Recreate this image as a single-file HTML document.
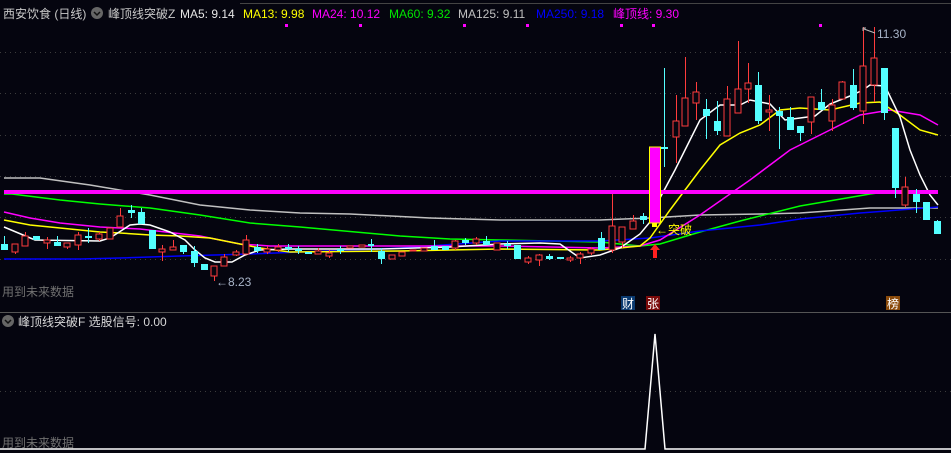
<!DOCTYPE html>
<html><head><meta charset="utf-8"><style>
html,body{margin:0;padding:0;background:#05050f;width:951px;height:453px;overflow:hidden}
svg{display:block}
text{font-family:"Liberation Sans","Noto Sans CJK SC",sans-serif;font-size:12px}
</style></head><body>
<svg width="951" height="453" viewBox="0 0 951 453" xmlns="http://www.w3.org/2000/svg">
<rect width="951" height="453" fill="#05050f"/>
<line x1="240" y1="3.5" x2="951" y2="3.5" stroke="#444" stroke-width="1"/>
<g stroke="#3c3c3c" stroke-dasharray="1 4">
<line x1="0" y1="52.5" x2="951" y2="52.5"/><line x1="0" y1="93.5" x2="951" y2="93.5"/>
<line x1="0" y1="135.5" x2="951" y2="135.5"/><line x1="0" y1="176.5" x2="951" y2="176.5"/>
<line x1="0" y1="217.5" x2="951" y2="217.5"/><line x1="0" y1="259.5" x2="951" y2="259.5"/>
<line x1="0" y1="391.5" x2="951" y2="391.5"/>
</g>
<line x1="0" y1="312.5" x2="951" y2="312.5" stroke="#555"/>
<!-- header -->
<text x="3" y="18" fill="#c8c8c8">西安饮食 (日线)</text>
<circle cx="97" cy="13" r="6" fill="#666"/><path d="M94 12 l3 3 l3 -3" stroke="#111" fill="none" stroke-width="1.5"/>
<text x="108" y="18" fill="#c8c8c8">峰顶线突破Z</text>
<text x="180" y="18" fill="#e6e6e6">MA5: 9.14</text>
<text x="243" y="18" fill="#ffff00">MA13: 9.98</text>
<text x="312" y="18" fill="#ff00ff">MA24: 10.12</text>
<text x="389" y="18" fill="#00e600">MA60: 9.32</text>
<text x="458" y="18" fill="#c0c0c0">MA125: 9.11</text>
<text x="536" y="18" fill="#0000ff">MA250: 9.18</text>
<text x="613" y="18" fill="#ff00ff">峰顶线: 9.30</text>
<g fill="#ff00ff"><rect x="285" y="24" width="3" height="3"/><rect x="359" y="24" width="3" height="3"/><rect x="463" y="24" width="3" height="3"/><rect x="526" y="24" width="3" height="3"/><rect x="620" y="24" width="3" height="3"/><rect x="652" y="24" width="3" height="3"/><rect x="819" y="24" width="3" height="3"/></g>
<!-- MA lines -->
<polyline fill="none" stroke="#c0c0c0" stroke-width="1.5" points="4,178 40,178 90,185 150,195 200,205 250,210 300,213 350,214 430,218 500,220 600,220 650,218 700,215 760,214 800,213 870,208 938,208"/>
<polyline fill="none" stroke="#00ff00" stroke-width="1.5" points="4,194 12,194 60,200 100,204 150,208 200,215 250,223 300,227 400,236 450,239 500,240 600,242 640,246 660,244 700,232 740,221 800,206 870,194 885,192"/>
<polyline fill="none" stroke="#0000ff" stroke-width="1.5" points="4,259 80,259 120,258 180,256 250,254 300,252 400,248 500,241 600,241 650,238 700,231 760,225 800,219 860,213 938,207"/>
<polyline fill="none" stroke="#ff00ff" stroke-width="1.5" points="4,212 30,218 60,223 100,227 140,229 200,236 240,244 270,246 400,246 500,246 600,248 640,246 660,240 700,215 750,180 790,150 830,130 860,115 890,110 920,115 938,125"/>
<polyline fill="none" stroke="#ffff00" stroke-width="1.5" points="4,220 30,225 60,228 100,232 120,233 150,235 180,236 210,238 240,244 260,248 290,252 400,251 500,249 600,250 640,246 650,238 670,210 700,170 720,145 740,133 760,125 780,110 800,108 830,110 860,103 880,102 900,115 920,130 938,135"/>
<polyline fill="none" stroke="#ffffff" stroke-width="1.5" points="4,227 35,240 100,241 110,238 130,225 140,224 150,225 170,232 185,240 195,250 205,258 215,262 232,262 245,255 260,250 290,249 380,249 450,247 500,244 540,243 560,244 580,258 600,255 620,248 640,234 650,222 660,198 675,170 690,140 700,120 720,105 740,105 750,100 770,104 785,120 800,118 815,116 830,104 850,96 863,90 870,85 885,86 900,117 910,150 920,175 930,195 938,205"/>
<rect x="4" y="190" width="934" height="4" fill="#ff00ff"/>
<!-- candles: wicks -->
<g stroke="#ff3c3c" stroke-width="1" shape-rendering="crispEdges" transform="translate(0.5,0)">
<line x1="15" y1="244" x2="15" y2="254"/><line x1="25" y1="232" x2="25" y2="246"/><line x1="47" y1="237" x2="47" y2="249"/><line x1="67" y1="243" x2="67" y2="249"/><line x1="78" y1="232" x2="78" y2="250"/><line x1="99" y1="232" x2="99" y2="241"/><line x1="120" y1="208" x2="120" y2="227"/><line x1="162" y1="245" x2="162" y2="261"/><line x1="173" y1="240" x2="173" y2="250"/><line x1="214" y1="266" x2="214" y2="281"/><line x1="224" y1="254" x2="224" y2="266"/><line x1="236" y1="250" x2="236" y2="256"/><line x1="246" y1="235" x2="246" y2="254"/><line x1="267" y1="246" x2="267" y2="254"/><line x1="278" y1="244" x2="278" y2="252"/><line x1="318" y1="248" x2="318" y2="254"/><line x1="329" y1="250" x2="329" y2="258"/><line x1="455" y1="240" x2="455" y2="250"/><line x1="476" y1="237" x2="476" y2="245"/><line x1="528" y1="256" x2="528" y2="264"/><line x1="539" y1="254" x2="539" y2="266"/><line x1="570" y1="256" x2="570" y2="262"/><line x1="580" y1="252" x2="580" y2="264"/><line x1="591" y1="247" x2="591" y2="255"/><line x1="612" y1="194" x2="612" y2="253"/><line x1="622" y1="227" x2="622" y2="248"/><line x1="633" y1="215" x2="633" y2="229"/>
<line x1="676" y1="95" x2="676" y2="163"/><line x1="685" y1="57" x2="685" y2="126"/><line x1="696" y1="82" x2="696" y2="120"/><line x1="727" y1="86" x2="727" y2="136"/><line x1="738" y1="41" x2="738" y2="113"/><line x1="748" y1="63" x2="748" y2="103"/><line x1="769" y1="95" x2="769" y2="131"/><line x1="811" y1="97" x2="811" y2="134"/><line x1="832" y1="99" x2="832" y2="131"/><line x1="842" y1="81" x2="842" y2="99"/><line x1="863" y1="27" x2="863" y2="124"/><line x1="874" y1="27" x2="874" y2="102"/><line x1="905" y1="177" x2="905" y2="207"/>
</g>
<g stroke="#54ffff" stroke-width="1" shape-rendering="crispEdges" transform="translate(0.5,0)">
<line x1="4" y1="236" x2="4" y2="250"/><line x1="57" y1="236" x2="57" y2="246"/><line x1="88" y1="228" x2="88" y2="243"/><line x1="131" y1="205" x2="131" y2="218"/><line x1="141" y1="208" x2="141" y2="224"/><line x1="183" y1="245" x2="183" y2="254"/><line x1="194" y1="246" x2="194" y2="267"/><line x1="257" y1="244" x2="257" y2="253"/><line x1="288" y1="244" x2="288" y2="252"/><line x1="298" y1="246" x2="298" y2="254"/><line x1="340" y1="246" x2="340" y2="254"/><line x1="371" y1="239" x2="371" y2="252"/><line x1="381" y1="248" x2="381" y2="264"/><line x1="434" y1="240" x2="434" y2="250"/><line x1="465" y1="238" x2="465" y2="245"/><line x1="486" y1="236" x2="486" y2="245"/><line x1="507" y1="241" x2="507" y2="249"/><line x1="549" y1="254" x2="549" y2="260"/><line x1="601" y1="232" x2="601" y2="250"/><line x1="643" y1="213" x2="643" y2="224"/><line x1="664" y1="68" x2="664" y2="167"/><line x1="706" y1="99" x2="706" y2="139"/><line x1="717" y1="101" x2="717" y2="135"/><line x1="758" y1="72" x2="758" y2="124"/><line x1="779" y1="107" x2="779" y2="149"/><line x1="790" y1="107" x2="790" y2="130"/><line x1="800" y1="126" x2="800" y2="141"/><line x1="821" y1="89" x2="821" y2="110"/><line x1="853" y1="69" x2="853" y2="110"/><line x1="884" y1="68" x2="884" y2="120"/><line x1="895" y1="128" x2="895" y2="198"/><line x1="916" y1="189" x2="916" y2="213"/><line x1="937" y1="220" x2="937" y2="234"/>
</g>
<!-- red bodies -->
<g fill="#05050f" stroke="#ff3c3c" stroke-width="1.4" shape-rendering="crispEdges">
<rect x="12" y="244" width="6" height="8"/><rect x="22" y="236" width="6" height="10"/><rect x="44" y="240" width="6" height="3"/><rect x="64" y="243" width="6" height="4"/><rect x="75" y="235" width="6" height="10"/><rect x="96" y="234" width="6" height="5"/><rect x="107" y="228" width="6" height="11"/><rect x="117" y="216" width="6" height="11"/><rect x="159" y="249" width="6" height="3"/><rect x="170" y="247" width="6" height="3"/><rect x="211" y="266" width="6" height="10"/><rect x="221" y="257" width="6" height="9"/><rect x="233" y="252" width="6" height="3"/><rect x="243" y="240" width="6" height="14"/><rect x="264" y="249" width="6" height="3"/><rect x="275" y="247" width="6" height="3"/><rect x="315" y="251" width="6" height="3"/><rect x="326" y="253" width="6" height="3"/><rect x="347" y="246" width="6" height="2"/><rect x="359" y="245" width="6" height="2"/><rect x="389" y="255" width="6" height="4"/><rect x="399" y="252" width="6" height="4"/><rect x="410" y="250" width="6" height="1"/><rect x="421" y="248" width="6" height="3"/><rect x="452" y="241" width="6" height="7"/><rect x="473" y="239" width="6" height="4"/><rect x="494" y="243" width="6" height="7"/><rect x="525" y="258" width="6" height="4"/><rect x="536" y="255" width="6" height="5"/><rect x="567" y="258" width="6" height="2"/><rect x="577" y="254" width="6" height="4"/><rect x="588" y="249" width="6" height="4"/><rect x="609" y="226" width="6" height="24"/><rect x="619" y="227" width="6" height="15"/><rect x="630" y="221" width="6" height="8"/>
<rect x="673" y="121" width="6" height="16"/><rect x="682" y="98" width="6" height="28"/><rect x="693" y="92" width="6" height="11"/><rect x="724" y="99" width="6" height="37"/><rect x="735" y="89" width="6" height="24"/><rect x="745" y="83" width="6" height="6"/><rect x="766" y="110" width="6" height="2"/><rect x="808" y="97" width="6" height="25"/><rect x="829" y="105" width="6" height="16"/><rect x="839" y="82" width="6" height="17"/><rect x="860" y="66" width="6" height="45"/><rect x="871" y="58" width="6" height="27"/><rect x="902" y="187" width="6" height="18"/>
</g>
<!-- cyan bodies -->
<g fill="#54ffff" shape-rendering="crispEdges">
<rect x="1" y="244" width="7" height="6"/><rect x="33" y="236" width="7" height="4"/><rect x="54" y="242" width="7" height="4"/><rect x="85" y="236" width="7" height="2"/><rect x="128" y="210" width="7" height="3"/><rect x="138" y="212" width="7" height="12"/><rect x="149" y="230" width="7" height="19"/><rect x="180" y="245" width="7" height="7"/><rect x="191" y="251" width="7" height="12"/><rect x="201" y="264" width="7" height="6"/><rect x="254" y="247" width="7" height="4"/><rect x="285" y="247" width="7" height="2"/><rect x="295" y="249" width="7" height="2"/><rect x="305" y="252" width="7" height="2"/><rect x="337" y="249" width="7" height="2"/><rect x="368" y="244" width="6" height="2"/><rect x="378" y="251" width="7" height="8"/><rect x="431" y="246" width="7" height="4"/><rect x="442" y="246" width="7" height="4"/><rect x="462" y="240" width="7" height="3"/><rect x="483" y="241" width="7" height="4"/><rect x="504" y="244" width="7" height="2"/><rect x="514" y="245" width="7" height="14"/><rect x="546" y="256" width="7" height="3"/><rect x="557" y="257" width="7" height="2"/><rect x="598" y="238" width="7" height="12"/><rect x="640" y="216" width="7" height="4"/><rect x="660" y="147" width="8" height="2"/>
<rect x="703" y="109" width="7" height="7"/><rect x="714" y="121" width="7" height="10"/><rect x="755" y="85" width="7" height="36"/><rect x="776" y="111" width="7" height="5"/><rect x="787" y="117" width="7" height="13"/><rect x="797" y="126" width="7" height="7"/><rect x="818" y="102" width="7" height="8"/><rect x="850" y="85" width="7" height="23"/><rect x="881" y="68" width="7" height="45"/><rect x="892" y="128" width="7" height="60"/><rect x="913" y="194" width="7" height="8"/><rect x="923" y="202" width="7" height="18"/><rect x="934" y="221" width="7" height="13"/>
</g>
<rect x="649.5" y="147" width="11" height="76" fill="#ff00ff" stroke="#ffff00" stroke-width="1"/>
<rect x="652" y="223" width="5" height="4" fill="#ffff00"/>
<text x="656" y="234" fill="#ffff00" font-size="12">←突破</text>
<path d="M655 244 l-5 6 h3 v8 h4 v-8 h3 z" fill="#ff2020"/>
<text x="877" y="38" fill="#a8b4c8">11.30</text>
<path d="M866 28 h-3 v3 M864 29 l11 4" stroke="#bbb" fill="none"/>
<text x="216" y="286" fill="#a8b4c8">←8.23</text>
<text x="2" y="296" fill="#707070">用到未来数据</text>
<rect x="621" y="296" width="14" height="14" fill="#0a3a70"/><text x="622" y="308" fill="#fff">财</text>
<rect x="646" y="296" width="14" height="14" fill="#7a0a0a"/><text x="647" y="308" fill="#fff">张</text>
<rect x="886" y="296" width="14" height="14" fill="#8a4a0a"/><text x="887" y="308" fill="#fff">榜</text>
<!-- panel 2 -->
<circle cx="8" cy="321" r="6" fill="#666"/><path d="M5 320 l3 3 l3 -3" stroke="#111" fill="none" stroke-width="1.5"/>
<text x="18" y="326" fill="#d8d8d8">峰顶线突破F 选股信号: 0.00</text>
<text x="2" y="447" fill="#707070">用到未来数据</text>
<polyline fill="none" stroke="#ffffff" stroke-width="1.5" points="0,449 645,449 655,334 665,449 951,449"/>
</svg>
</body></html>
